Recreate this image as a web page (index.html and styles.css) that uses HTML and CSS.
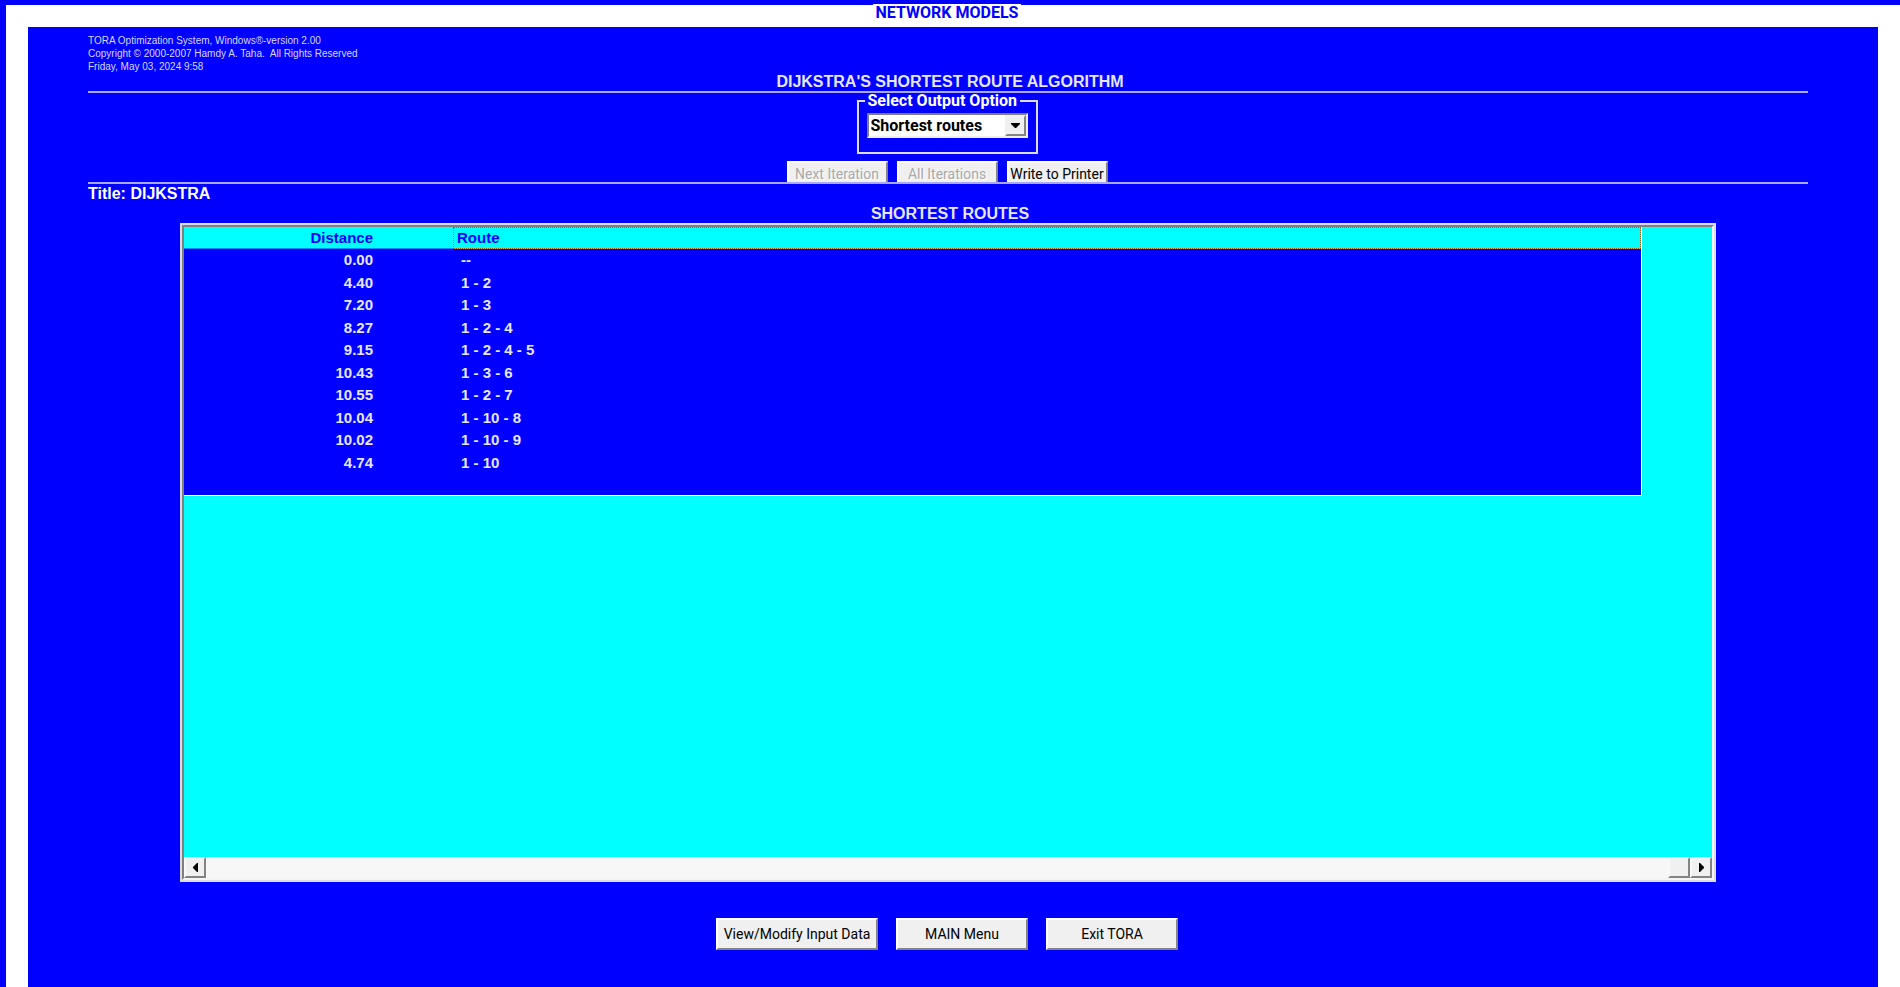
FILE: index.html
```html
<!DOCTYPE html>
<html lang="en">
<head>
<meta charset="utf-8">
<title>TORA - Network Models</title>
<link rel="stylesheet" href="styles.css">
</head>
<body>
<div class="window">
  <header class="titlebar"><span class="titlebar-text">NETWORK MODELS</span></header>
  <main class="panel">
    <div class="about">
      <p>TORA Optimization System, Windows®-version 2.00</p>
      <p>Copyright © 2000-2007 Hamdy A. Taha.&nbsp; All Rights Reserved</p>
      <p>Friday, May 03, 2024 9:58</p>
    </div>
    <h1 class="heading">DIJKSTRA'S SHORTEST ROUTE ALGORITHM</h1>
    <hr class="rule">
    <form class="controls">
      <fieldset class="output">
        <legend>Select Output Option</legend>
        <div class="combo">
          <select aria-label="Select Output Option"><option>Shortest routes</option></select>
          <span class="combo-arrow"><svg width="9" height="5" viewBox="0 0 9 5"><path d="M0 0h9v1L5 5H4L0 1z"/></svg></span>
        </div>
      </fieldset>
      <div class="steps">
        <button type="button" class="btn" disabled>Next Iteration</button>
        <button type="button" class="btn" disabled>All Iterations</button>
        <button type="button" class="btn">Write to Printer</button>
      </div>
    </form>
    <hr class="rule">
    <p class="problem">Title: DIJKSTRA</p>
    <h2 class="heading">SHORTEST ROUTES</h2>
    <section class="grid">
      <div class="grid-inner">
        <div class="grid-view">
          <table class="routes">
            <thead><tr><th class="dist">Distance</th><th class="route">Route</th></tr></thead>
            <tbody>
              <tr><td class="dist">0.00</td><td class="route">--</td></tr>
              <tr><td class="dist">4.40</td><td class="route">1 - 2</td></tr>
              <tr><td class="dist">7.20</td><td class="route">1 - 3</td></tr>
              <tr><td class="dist">8.27</td><td class="route">1 - 2 - 4</td></tr>
              <tr><td class="dist">9.15</td><td class="route">1 - 2 - 4 - 5</td></tr>
              <tr><td class="dist">10.43</td><td class="route">1 - 3 - 6</td></tr>
              <tr><td class="dist">10.55</td><td class="route">1 - 2 - 7</td></tr>
              <tr><td class="dist">10.04</td><td class="route">1 - 10 - 8</td></tr>
              <tr><td class="dist">10.02</td><td class="route">1 - 10 - 9</td></tr>
              <tr><td class="dist">4.74</td><td class="route">1 - 10</td></tr>
            </tbody>
          </table>
        </div>
        <div class="scroll">
          <button type="button" class="scroll-btn" aria-label="Scroll left"><svg width="5" height="9" viewBox="0 0 5 9"><path d="M5 0v9H4L0 5V4L4 0z"/></svg></button>
          <div class="scroll-track"><div class="scroll-thumb"></div></div>
          <button type="button" class="scroll-btn" aria-label="Scroll right"><svg width="5" height="9" viewBox="0 0 5 9"><path d="M0 0v9h1l4-4V4L1 0z"/></svg></button>
        </div>
      </div>
    </section>
    <nav class="actions">
      <button type="button" class="btn btn-wide">View/Modify Input Data</button>
      <button type="button" class="btn">MAIN Menu</button>
      <button type="button" class="btn">Exit TORA</button>
    </nav>
  </main>
</div>
</body>
</html>
```

FILE: styles.css
```css
* { box-sizing: border-box; }
body { margin: 0; background: #00f; font-family: "Liberation Sans", Arial, sans-serif; }
p, h1, h2 { margin: 0; }

.window {
  display: flex;
  flex-direction: column;
  min-height: 100vh;
  padding: 5px 22px 0;
  background: #fff;
  border-left: 6px solid #00f;
  box-shadow: inset 0 5px #00f;
}
.titlebar {
  display: flex;
  justify-content: center;
  height: 22px;
  padding-right: 12px;
}
.titlebar-text {
  margin-top: -1px;
  height: 18px;
  padding: 0 3px;
  background: #fff;
  color: #00f;
  font: bold 16px/17px Roboto, sans-serif;
}
.panel {
  flex: 1;
  padding: 7px 70px 36px 60px;
  background: #00f;
  color: #fff;
}
.about { font-size: 10px; line-height: 13px; color: #d8d8ff; }
.heading {
  font-size: 16px;
  font-weight: bold;
  line-height: 18px;
  padding-left: 4px;
  text-align: center;
  color: #e6e6ff;
}
.rule { height: 2px; margin: 0; border: 0; background: #a8a8ff; }

.controls {
  display: flex;
  flex-direction: column;
  align-items: center;
  gap: 7px;
  padding-right: 2px;
}
.output {
  width: 181px;
  margin: 0;
  padding: 4px 8px 14px;
  border: 2px solid #dcdce4;
}
.output legend {
  margin-left: -2px;
  padding: 0 3px;
  font: bold 16px/16px Roboto, sans-serif;
  white-space: nowrap;
}
.combo { position: relative; height: 25px; }
.combo select {
  appearance: none;
  width: 100%;
  height: 100%;
  padding: 0 24px 0 2px;
  border: 2px solid;
  border-color: #808080 #f0f0f0 #f0f0f0 #808080;
  border-radius: 0;
  background: #fff;
  color: #000;
  font: bold 16px/20px Roboto, sans-serif;
}
.combo-arrow {
  position: absolute;
  top: 2px;
  right: 2px;
  bottom: 2px;
  width: 21px;
  display: flex;
  align-items: center;
  justify-content: center;
  pointer-events: none;
  background: #f0f0f0;
  border: 2px solid;
  border-color: #f0f0f0 #848484 #848484 #f0f0f0;
}
.steps { display: flex; gap: 9px; }
.btn {
  width: 132px;
  height: 32px;
  padding: 0;
  border: 2px solid;
  border-color: #fff #848484 #848484 #fff;
  border-radius: 0;
  background: #f0f0f0;
  color: #000;
  font: 14px/16px Roboto, sans-serif;
  white-space: nowrap;
}
.btn:disabled { color: #a8a8a8; text-shadow: 1px 1px #fff; }
.btn-wide { width: 162px; }
.steps .btn { width: 101px; height: 21px; padding-top: 2px; border-bottom: 0; }

.problem { padding-bottom: 1px; font-size: 16px; font-weight: bold; line-height: 20px; }

.grid { margin: 0 92px; border: 2px solid #dcdce8; }
.grid-inner { border: 2px solid; border-color: #808080 #f4f4f4 #f4f4f4 #808080; }
.grid-view { height: 630px; padding-right: 70px; background: #0ff; }
.routes {
  width: 100%;
  border-collapse: separate;
  border-spacing: 0;
  table-layout: fixed;
  background: #00f;
  color: #e6e6ff;
  font-size: 15px;
  font-weight: bold;
  line-height: 20px;
  border-right: 1px solid #fff;
  border-bottom: 1px solid #fff;
}
.routes th, .routes td { height: 22px; padding: 0; }
.routes tr:nth-child(even) td { height: 23px; }
.routes tbody tr:last-child td { height: 44px; padding-bottom: 20px; }
.routes th { background: #0ff; color: #00f; border-bottom: 1px solid #08f; }
.routes .dist { width: 269px; padding-right: 80px; text-align: right; }
.routes td.route { padding-left: 8px; }
.routes th.route { padding-left: 3px; border: 1px dotted #966414; text-align: left; }

.scroll { display: flex; height: 21px; }
.scroll-btn, .scroll-thumb {
  width: 22px;
  padding: 0;
  display: flex;
  align-items: center;
  justify-content: center;
  background: #f0f0f0;
  border: 2px solid;
  border-color: #f8f8f8 #848484 #848484 #f8f8f8;
  border-radius: 0;
}
.scroll-track { flex: 1; display: flex; justify-content: flex-end; background: #f7f7f7; }

.actions { display: flex; justify-content: center; gap: 18px; padding: 36px 2px 0 0; }
```
